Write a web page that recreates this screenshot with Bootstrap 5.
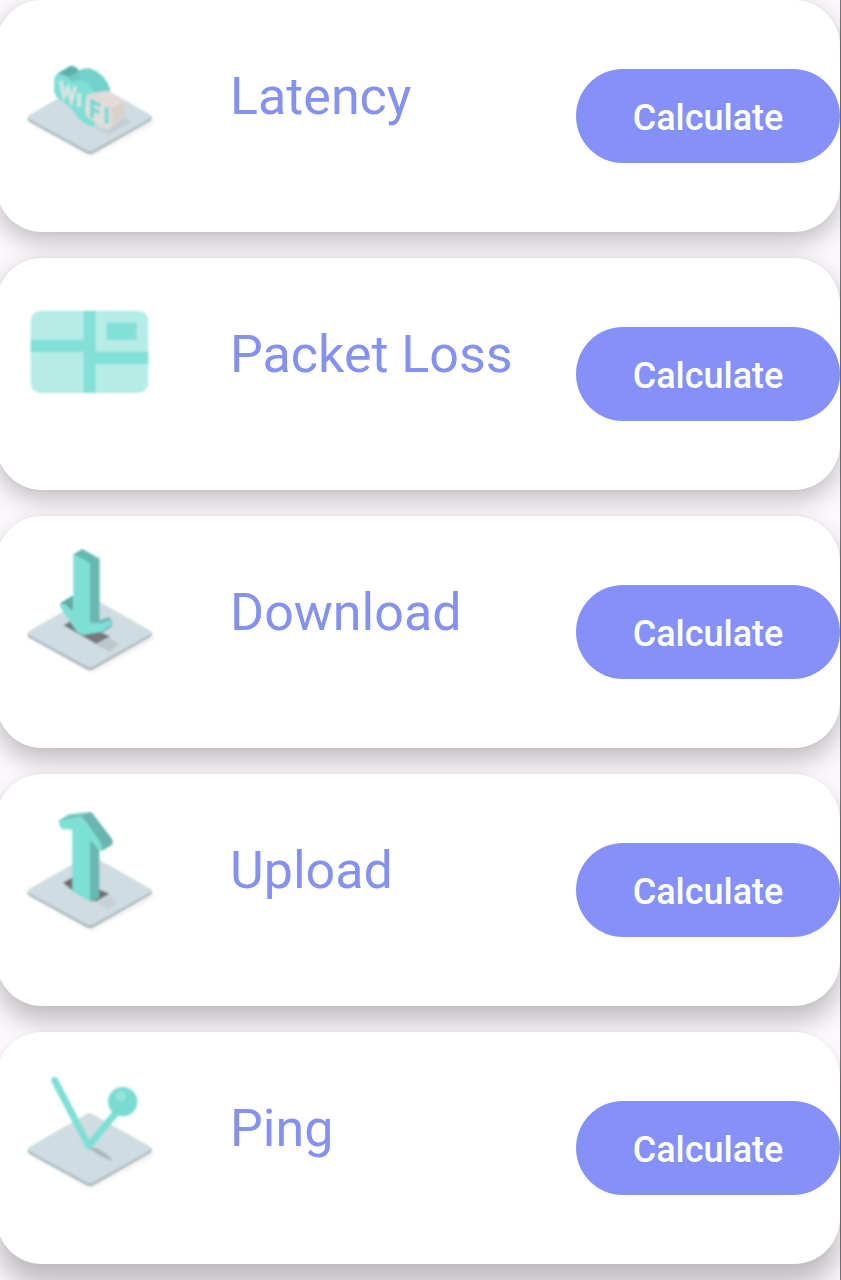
<!DOCTYPE html>
<html lang="en">
<head>
<meta charset="utf-8">
<meta name="viewport" content="width=device-width, initial-scale=1">
<title>Network tests</title>
<link href="https://cdn.jsdelivr.net/npm/bootstrap@5.3.0/dist/css/bootstrap.min.css" rel="stylesheet">
<style>
  body { font-family: Roboto, sans-serif; background: #fdf8fc; overflow-x: hidden; }
  .test-list { gap: 26px; margin-left: -4px; padding-bottom: 16px; border-right: 1px solid #77757a; }
  .test-card { --drop: 10px; min-height: 232px; border-radius: 46px; background: #fff; padding-left: 14px; box-shadow: 0 var(--drop) 26px rgba(0, 0, 0, .24), 0 0 4px rgba(0, 0, 0, .05); }
  .test-card:nth-child(3) { --drop: 13px; }
  .test-card:nth-child(4) { --drop: 16px; }
  .test-card:nth-child(5) { --drop: 22px; }
  .test-icon { width: 160px; height: 140px; margin-bottom: 44px; }
  .test-name { font-size: 52px; line-height: 60px; color: #8591ef; margin: 0 0 38px 60px; }
  .btn-calc { --bs-btn-bg: #8591f8; --bs-btn-color: #fff; --bs-btn-hover-bg: #7380ee; --bs-btn-hover-color: #fff; --bs-btn-active-bg: #6472e4; width: 264px; height: 94px; font-size: 36px; font-weight: 500; padding-top: 10px; }
</style>
</head>
<body>
<svg width="0" height="0" class="position-absolute" aria-hidden="true">
  <defs>
    <filter id="soft" x="-20%" y="-20%" width="140%" height="140%"><feGaussianBlur stdDeviation="6"/></filter>
    <filter id="edge" x="-5%" y="-5%" width="110%" height="110%"><feGaussianBlur stdDeviation="2.4"/></filter>
    <g id="tile">
      <path d="M60 290L244 396L436 292L240 180Z" fill="#000" opacity=".1" filter="url(#soft)"/>
      <path d="M53 280Q50 289 60 295L229 388Q240 394 251 388L419 292Q428 286 425 277Z" fill="#adb9bd"/>
      <path d="M58 273L229 175Q239 169 249 175L419 271Q429 278 419 284L251 379Q240 385 229 379L58 286Q49 280 58 273Z" fill="#cfdce1"/>
    </g>
  </defs>
</svg>
<main class="test-list d-flex flex-column">
  <section class="test-card d-flex align-items-center">
    <svg class="test-icon flex-shrink-0" viewBox="0 0 480 420" aria-hidden="true"><g filter="url(#edge)">
      <use href="#tile"/>
      <g transform="translate(0 78)">
        <path d="M245 232L294 240L342 204L366 214L300 252Z" fill="#c3ced3"/>
        <path d="M132 91Q134 78 144 70L181 48Q194 45 207 62Q223 51 246 58Q285 72 301 120L260 180L210 120Z" fill="#6fc8c1"/>
        <path d="M144 70L181 48Q196 48 207 62L177 80Z" fill="#5eb0aa"/>
        <path d="M208 64Q225 51 246 58Q287 75 299 117L258 134Q245 101 208 90Z" fill="#72d1ca"/>
        <path d="M133 92Q133 70 151 72Q171 75 187 95Q222 79 245 111L262 137L254 232Q225 228 202 201Q186 172 149 150Q135 140 132 120Z" fill="#7edfd7"/>
        <path d="M228 151Q228 126 249 130L292 122L332 145Q343 151 343 166V204L306 234Q300 240 288 233L231 195Z" fill="#d9d1ce"/>
        <path d="M249 130L292 122L331 143Q339 147 341 157L305 173Z" fill="#e2dcd9"/>
        <path d="M228 154Q228 129 248 137L288 160Q304 170 304 187V222Q304 242 286 233L231 202Q224 187 228 154Z" fill="#e4dedb"/>
        <path d="M152 93L162 138L174 115L184 151L196 109M207 129V171" fill="none" stroke="#d3e4df" stroke-width="12"/>
        <path d="M246 205V154L272 168M246 177L268 188M290 172V222" fill="none" stroke="#80d9d2" stroke-width="13"/>
      </g>
    </g></svg>
    <h2 class="test-name fw-normal">Latency</h2>
    <button type="button" class="btn btn-calc rounded-pill border-0 ms-auto flex-shrink-0">Calculate</button>
  </section>

  <section class="test-card d-flex align-items-center">
    <svg class="test-icon flex-shrink-0" viewBox="0 0 480 420" aria-hidden="true"><g filter="url(#edge)" transform="translate(0 39)">
      <rect x="62" y="47" width="353" height="247" rx="32" fill="#b5ece6"/>
      <path d="M221 47H257V170H415V207H257V294H221V171H62V134H221ZM290 83H380V135H290Z" fill="#83e0d9"/>
    </g></svg>
    <h2 class="test-name fw-normal">Packet Loss</h2>
    <button type="button" class="btn btn-calc rounded-pill border-0 ms-auto flex-shrink-0">Calculate</button>
  </section>

  <section class="test-card d-flex align-items-center">
    <svg class="test-icon flex-shrink-0" viewBox="0 0 480 420" aria-hidden="true"><g filter="url(#edge)">
      <use href="#tile"/>
      <path d="M252 310L290 288L326 312L300 336Z" fill="#bdc6c9"/>
      <path d="M160 256L186 241L300 289L258 311Z" fill="#747779"/>
      <path d="M150 190L190 166V211L160 211Z" fill="#5eaaa5"/>
      <path d="M190 43L217 27L269 56L241 72Z" fill="#64b9b3"/>
      <path d="M239 70L269 56V241L296 231Q307 239 307 250V259L278 278L239 252Z" fill="#69b7b1"/>
      <path d="M190 42L240 70V248L278 249L296 241Q307 243 305 254L273 276L222 285Q208 283 201 275L156 210Q148 198 151 190L167 193Q180 209 190 212Z" fill="#7edfd6"/>
    </g></svg>
    <h2 class="test-name fw-normal">Download</h2>
    <button type="button" class="btn btn-calc rounded-pill border-0 ms-auto flex-shrink-0">Calculate</button>
  </section>

  <section class="test-card d-flex align-items-center">
    <svg class="test-icon flex-shrink-0" viewBox="0 0 480 420" aria-hidden="true"><g filter="url(#edge)">
      <use href="#tile"/>
      <g transform="translate(0 6)">
        <path d="M264 308L298 286L322 305L295 330Z" fill="#c6d1d6"/>
        <path d="M159 248L185 233L298 281L257 305L180 266Z" fill="#6e6d6e"/>
        <path d="M236 119L268 135V294L243 306L236 300Z" fill="#67b8b1"/>
        <path d="M211 48L240 36Q247 38 251 45L306 116Q311 126 306 135L275 153L240 119Z" fill="#68b6af"/>
        <path d="M145 62L177 43L240 36L211 52L158 84Z" fill="#72cbc4"/>
        <path d="M146 62L210 51Q219 51 225 60L269 124Q279 139 275 153Q266 151 259 141L240 119V304L187 275V89L158 88Q147 79 146 62Z" fill="#7edfd6"/>
      </g>
    </g></svg>
    <h2 class="test-name fw-normal">Upload</h2>
    <button type="button" class="btn btn-calc rounded-pill border-0 ms-auto flex-shrink-0">Calculate</button>
  </section>

  <section class="test-card d-flex align-items-center">
    <svg class="test-icon flex-shrink-0" viewBox="0 0 480 420" aria-hidden="true"><g filter="url(#edge)">
      <use href="#tile"/>
      <g transform="translate(0 27)">
        <path d="M235 244L260 250Q296 267 307 286Q286 286 235 249Z" fill="#aab6bb"/>
        <path d="M134 46L236 243L318 143" fill="none" stroke="#7edfd6" stroke-width="21" stroke-linecap="round" stroke-linejoin="round"/>
        <circle cx="338" cy="110" r="44" fill="#7adbd3"/>
        <circle cx="332" cy="94" r="15" fill="#94e5de"/>
      </g>
    </g></svg>
    <h2 class="test-name fw-normal">Ping</h2>
    <button type="button" class="btn btn-calc rounded-pill border-0 ms-auto flex-shrink-0">Calculate</button>
  </section>
</main>
<script src="https://cdn.jsdelivr.net/npm/bootstrap@5.3.0/dist/js/bootstrap.bundle.min.js"></script>
</body>
</html>
